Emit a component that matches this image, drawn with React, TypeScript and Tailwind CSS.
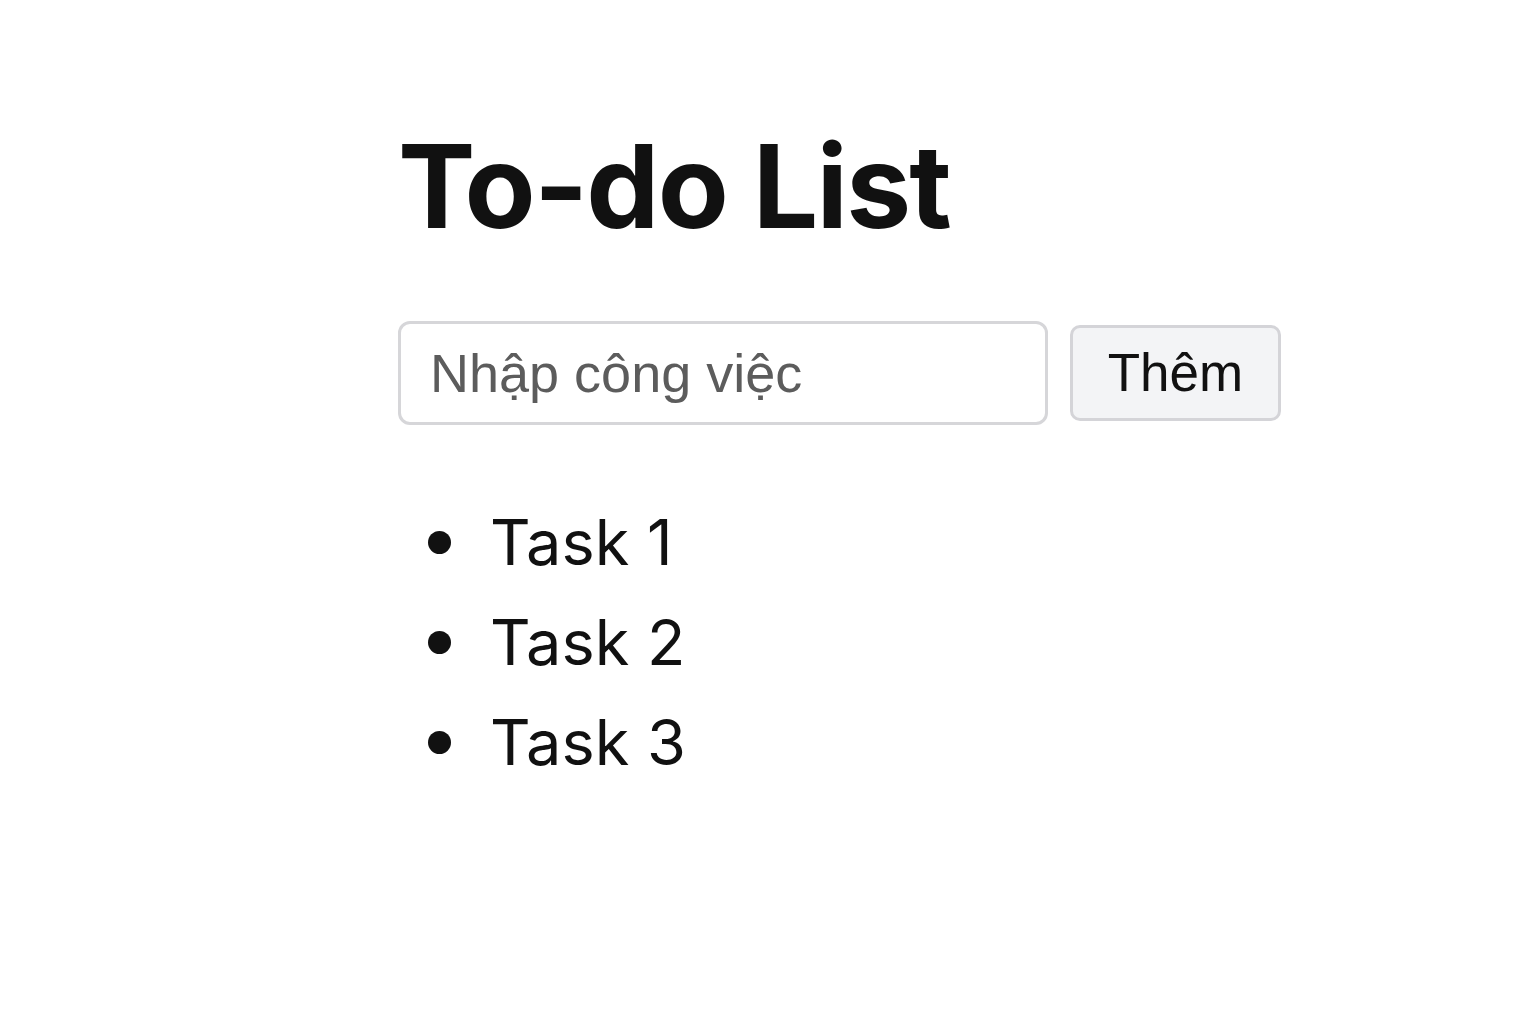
import React from "react";

export default function App() {
  const tasks = ["Task 1", "Task 2", "Task 3"];
  return (
    <div className="min-h-[1024px] w-full bg-white text-[#111111]">
      <div className="pl-[398px] pt-[128px] font-['Inter',sans-serif]">
        <h1 className="text-[116px] font-bold leading-none tracking-[-1.8px]">To-do List</h1>
        <div className="mt-[77px] flex items-center gap-[22px] font-['Liberation_Sans',Arial,sans-serif]">
          <input
            className="h-[104px] w-[650px] rounded-[12px] border-[3px] border-[#d6d6d9] bg-white px-[29px] text-[54px] text-[#111] outline-none placeholder:text-[#5c5c5c]"
            placeholder="Nhập công việc"
          />
          <button className="h-[96px] w-[211px] rounded-[10px] border-[3px] border-[#d4d4d8] bg-[#f3f4f6] text-[53px] text-[#111]">
            Thêm
          </button>
        </div>
        <ul className="mt-[67px] flex flex-col">
          {tasks.map((t) => (
            <li key={t} className="flex h-[100px] items-center text-[63px] leading-none">
              <span className="ml-[30px] mr-[39px] h-[23px] w-[23px] rounded-full bg-[#111]" />
              <span>{t}</span>
            </li>
          ))}
        </ul>
      </div>
    </div>
  );
}
